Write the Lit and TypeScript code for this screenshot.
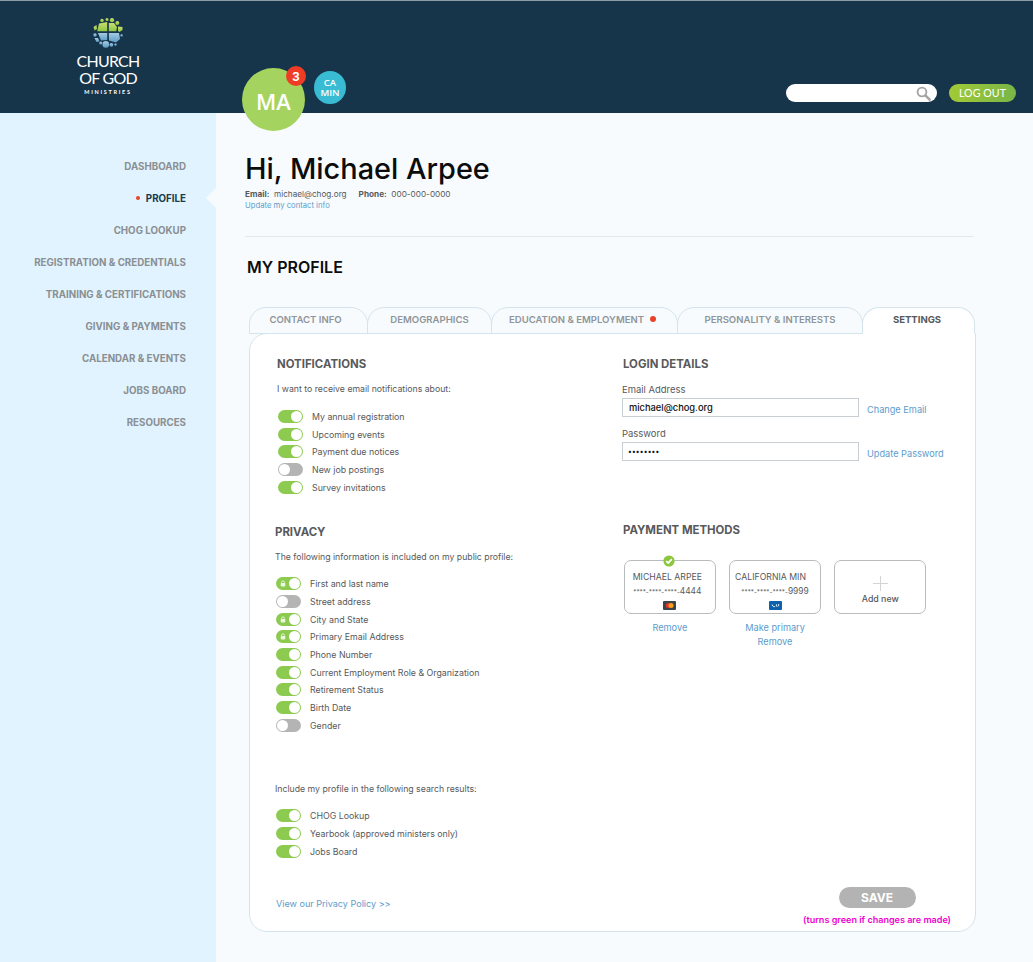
import { LitElement, html, css, svg } from "lit";
import { customElement } from "lit/decorators.js";

const NAV = ["DASHBOARD", "PROFILE", "CHOG LOOKUP", "REGISTRATION & CREDENTIALS", "TRAINING & CERTIFICATIONS", "GIVING & PAYMENTS", "CALENDAR & EVENTS", "JOBS BOARD", "RESOURCES"];
const TABS = [
  { t: "CONTACT INFO", w: 119 },
  { t: "DEMOGRAPHICS", w: 125 },
  { t: "EDUCATION & EMPLOYMENT", w: 187, dot: true },
  { t: "PERSONALITY & INTERESTS", w: 186 },
  { t: "SETTINGS", w: 113, active: true },
];
type Row = [string, boolean, boolean?];
const NOTIFY: Row[] = [["My annual registration", true], ["Upcoming events", true], ["Payment due notices", true], ["New job postings", false], ["Survey invitations", true]];
const PRIV: Row[] = [["First and last name", true, true], ["Street address", false], ["City and State", true, true], ["Primary Email Address", true, true], ["Phone Number", true], ["Current Employment Role & Organization", true], ["Retirement Status", true], ["Birth Date", true], ["Gender", false]];
const SEARCH: Row[] = [["CHOG Lookup", true], ["Yearbook (approved ministers only)", true], ["Jobs Board", true]];

const logo = svg`<svg class="mark" width="30" height="30" viewBox="0 0 30 30">
  <defs>
    <linearGradient id="g" x1="0" y1="0" x2="0" y2="1"><stop offset="0" stop-color="#c9de72"/><stop offset="1" stop-color="#8fc640"/></linearGradient>
    <linearGradient id="b" x1="0" y1="0" x2="0" y2="1"><stop offset="0" stop-color="#a3cbe6"/><stop offset="1" stop-color="#5f9cc4"/></linearGradient>
  </defs>
  <g fill="url(#g)">
    <polygon points="6,5.5 14.2,4 14.2,13.3 4.2,13.3"/>
    <polygon points="15.8,5 21,5 24,9 23.2,13.3 15.8,13.3"/>
    <circle cx="9" cy="2.4" r="1.7"/><circle cx="14" cy="1.6" r="1.5"/><circle cx="19" cy="2.2" r="2.1"/>
    <circle cx="24.3" cy="5" r="2"/><polygon points="25,8.5 29.5,9 29.5,12 26.5,14 25,13"/>
    <polygon points="0.5,9 3.5,7 4,11 1.5,12.5"/>
  </g>
  <g fill="url(#b)">
    <polygon points="5,15 14.2,15 14.2,22 8,22.5"/>
    <polygon points="15.8,15 26,15 27,21 23,24.5 16,22.5"/>
    <circle cx="2" cy="17" r="1.7"/>
    <polygon points="1.5,20 5,20 6.5,23.5 3.5,24"/>
    <circle cx="7.8" cy="25" r="1.6"/>
    <circle cx="12.8" cy="26.4" r="3.3"/><circle cx="18.4" cy="26.8" r="1.9"/><circle cx="22.5" cy="26.6" r="1.2"/>
    <circle cx="28.6" cy="17.4" r="1.2"/>
  </g>
</svg>`;

const search = svg`<svg width="15" height="15" viewBox="0 0 15 15" fill="none" stroke="#a5a5a5"><circle cx="6" cy="6" r="4.4" stroke-width="1.9"/><path d="M9.4 9.4 L13.6 13.6" stroke-width="2.6" stroke-linecap="round"/></svg>`;
const lock = svg`<svg class="lock" width="6" height="7" viewBox="0 0 6 7"><path d="M1.6 3.4V2.2a1.4 1.4 0 0 1 2.8 0V3.4" fill="none" stroke="#eef7e2" stroke-width=".8"/><rect x=".7" y="3" width="4.6" height="3.6" rx=".8" fill="#eef7e2"/></svg>`;
const check = svg`<svg width="12" height="12" viewBox="0 0 12 12"><circle cx="6" cy="6" r="5.6" fill="#8cc63f"/><path d="M3.2 6.2 5.2 8 8.8 4.2" fill="none" stroke="#fff" stroke-width="1.7"/></svg>`;
const mc = svg`<svg class="ci" width="13" height="9" viewBox="0 0 13 9"><rect width="13" height="9" rx="1" fill="#3c4349"/><circle cx="5.2" cy="4.5" r="2.5" fill="#e4322b"/><circle cx="8" cy="4.5" r="2.5" fill="#f7a11d"/></svg>`;
const visa = svg`<svg class="ci" width="13" height="9" viewBox="0 0 13 9"><rect width="13" height="9" rx="1" fill="#0d62ab"/><path d="M3 3.6c1 2.4 2.4 2.4 3.2 1.6M7.6 3.4v2M9.6 3.2c.2 1.2 0 2-.9 2.2" fill="none" stroke="#fff" stroke-width="1"/></svg>`;

@customElement("app-root")
export class AppRoot extends LitElement {
  static styles = css`
    :host { display: block; min-height: 962px; background: #f7fbfe; font-family: Inter, "Liberation Sans", sans-serif; color: #58595b; }
    * { box-sizing: border-box; }
    .top { position: relative; height: 113px; background: #17354a; border-top: 1px solid #8b9ca8; display: flex; align-items: flex-end; }
    .brand { width: 216px; display: flex; flex-direction: column; align-items: center; color: #fff; font-family: Lato, sans-serif; padding-top: 17px; height: 112px; }
    .brand .mark { display: block; margin-bottom: 4px; }
    .brand .l1 { font-size: 16px; line-height: 17px; letter-spacing: -0.75px; font-weight: 400; }
    .brand .l2 { font-size: 5.5px; line-height: 8px; letter-spacing: 1.7px; font-weight: 700; margin-top: 2px; }
    .avatar { position: absolute; left: 242px; top: 67px; width: 63px; height: 63px; border-radius: 50%; background: #a5d35f; color: #fff; display: flex; align-items: center; justify-content: center; font-size: 22px; font-weight: 600; font-family: "Open Sans", sans-serif; padding-top: 3px; z-index: 2; }
    .badge { position: absolute; left: 44px; top: -2px; width: 20px; height: 20px; border-radius: 50%; background: #ee3c25; color: #fff; font-size: 13px; font-weight: 700; display: flex; align-items: center; justify-content: center; font-family: Roboto, sans-serif; }
    .min { position: absolute; left: 314px; top: 70px; width: 32px; height: 33px; border-radius: 50%; background: #39bcd3; color: #fff; font-size: 9.5px; line-height: 9.5px; font-weight: 600; font-family: "Open Sans", sans-serif; display: flex; align-items: center; justify-content: center; text-align: center; }
    .tools { margin-left: auto; display: flex; gap: 12px; padding: 0 17px 11px 0; }
    .search { width: 151px; height: 18px; background: #fff; border-radius: 9px; display: flex; align-items: center; justify-content: flex-end; padding-right: 6px; }
    .logout { width: 67px; height: 18px; border-radius: 9px; background: linear-gradient(90deg, #a2ca35, #79b548); color: #fff; font: 400 10.6px/19px Lato, sans-serif; text-align: center; letter-spacing: 0.1px; }
    .body { display: flex; }
    nav { position: relative; width: 216px; min-height: 849px; background: #e1f3fe; padding: 37px 30px 0 0; }
    .item { height: 32px; display: flex; align-items: center; justify-content: flex-end; gap: 6px; font-size: 9.75px; font-weight: 700; color: #8a8f93; white-space: nowrap; }
    .item.on { color: #1a3a50; position: relative; }
    .item .d { width: 4px; height: 4px; border-radius: 50%; background: #e8432a; }
    .item .arrow { position: absolute; right: -30px; top: 6px; width: 0; height: 0; border: 10px solid transparent; border-right-color: #f7fbfe; border-left: 0; }
    main { width: 760px; padding: 37px 0 30px 29px; }
    h1 { margin: 0; font-size: 28.9px; line-height: 38px; font-weight: 500; color: #0c0c0c; }
    .meta { font-size: 8.2px; line-height: 11px; margin-top: 1px; color: #58595b; display: flex; gap: 12px; }
    .meta b { font-weight: 700; }
    .upd { font-size: 7.7px; line-height: 11px; color: #5d9ccb; }
    .hr { height: 1px; background: #e2e8ec; width: 729px; margin-top: 25px; }
    h2 { margin: 20px 0 0 2px; font-size: 16px; line-height: 20px; font-weight: 600; color: #0c0c0c; }
    .tabs { display: flex; margin: 30px 0 0 4px; position: relative; z-index: 1; }
    .tab { height: 27px; margin-bottom: -1px; border: 1px solid #d5e4ec; border-radius: 17px 17px 0 0; margin-right: -1px; display: flex; align-items: center; justify-content: center; gap: 6px; font-size: 9.55px; font-weight: 600; color: #8f9598; background: #f7fbfe; padding-bottom: 3px; }
    .tab:first-child { padding-right: 6px; }
    .tab:nth-child(3) { padding-right: 4px; }
    .tab:last-child { padding-right: 3px; }
    .tab.on { background: #fff; border-bottom-color: #fff; color: #58595b; font-weight: 700; }
    .tab .d { width: 6px; height: 6px; border-radius: 50%; background: #e8432a; }
    .panel { margin-left: 4px; width: 727px; background: #fff; border: 1px solid #d5e4ec; border-radius: 18px 0 18px 18px; padding: 23px 24px 4px 27px; }
    .cols { display: grid; grid-template-columns: 346px 1fr; }
    h3 { margin: 0; font-size: 11.4px; line-height: 14px; font-weight: 700; color: #58595b; }
    .sub { font-size: 8.73px; line-height: 14px; margin-top: 11px; color: #58595b; }
    .list { margin-top: 10.5px; }
    .list.wide { margin-top: 11.5px; }
    .row { height: 17.7px; display: flex; align-items: center; gap: 9px; font-size: 8.8px; color: #58595b; padding-left: 1px; }
    .sw { position: relative; width: 25px; height: 13px; border-radius: 7px; background: #8ccb4f; flex: none; }
    .sw::after { content: ""; position: absolute; right: 1px; top: 1px; width: 11px; height: 11px; border-radius: 50%; background: #fff; }
    .sw.off { background: #b4b4b4; }
    .sw.off::after { right: auto; left: 1px; }
    .lock { position: absolute; left: 4px; top: 3px; }
    .priv { margin-left: -2px; margin-top: 29.5px; }
    .incl { margin-top: 47.5px; margin-left: -2px; }
    .lab { font-size: 9.45px; line-height: 12px; margin-top: 13px; margin-left: -1px; }
    .lab.second { margin-top: 11px; }
    .lab + .fld { margin-top: 2px; }
    .fld { display: flex; align-items: flex-end; gap: 8px; margin-left: -1px; }
    .input { width: 237px; height: 19px; background: #fff; border: 1px solid #c9ced2; font-size: 9.3px; font-weight: 500; color: #111; padding-left: 6px; display: flex; align-items: center; }
    .input.pw { padding-left: 5px; font-size: 7px; letter-spacing: 0.2px; }
    .link { color: #5d9ccb; font-size: 9.2px; line-height: 14px; white-space: nowrap; }
    .pm { margin-top: 62px; }
    .cards { display: flex; gap: 13.5px; margin: 23px 0 0 1px; }
    .cardcol { width: 91.7px; display: flex; flex-direction: column; align-items: center; }
    .card { position: relative; width: 100%; height: 54px; border: 1px solid #b9bcbe; border-radius: 7px; display: flex; flex-direction: column; align-items: center; background: #fff; font-size: 8.7px; }
    .card .nm { line-height: 12px; margin-top: 10px; white-space: nowrap; padding-right: 5px; }
    .cardcol:nth-child(2) .nm { padding-right: 9px; }
    .card .nr { line-height: 12px; margin-top: 2px; white-space: nowrap; font-size: 8.4px; }
    .cardcol:first-child .nr { padding-right: 5px; }
    .mask { font-size: 6.3px; }
    .card .ci { margin-top: 3px; display: block; }
    .check { position: absolute; left: 38px; top: -6px; line-height: 0; }
    .acts { margin-top: 7px; text-align: center; }
    .acts .link { display: block; }
    .plus { position: relative; width: 15px; height: 15px; margin-top: 15px; }
    .plus::before, .plus::after { content: ""; position: absolute; background: #d2d4d5; }
    .plus::before { left: 7px; top: 0; width: 1px; height: 15px; }
    .plus::after { left: 0; top: 7px; width: 15px; height: 1px; }
    .add { font-size: 8.8px; font-weight: 500; line-height: 12px; margin-top: 2px; }
    .foot { display: flex; justify-content: space-between; margin-top: 27px; }
    .foot > .link { margin: 10px 0 0 -1px; font-size: 9.05px; }
    .sv { display: flex; flex-direction: column; align-items: center; }
    .save { width: 77px; height: 21px; border-radius: 11px; background: #b3b3b3; color: #fff; font-size: 12px; font-weight: 700; line-height: 21px; text-align: center; }
    .note { font-size: 9.05px; line-height: 14px; color: #f000d0; font-weight: 600; margin-top: 5px; white-space: nowrap; }
  `;

  private rows(list: Row[]) {
    return list.map(([t, on, locked]) => html`<div class="row"><span class="sw ${on ? "" : "off"}">${locked ? lock : ""}</span><span>${t}</span></div>`);
  }

  render() {
    return html`
      <div class="top">
        <div class="brand">${logo}<div class="l1">CHURCH</div><div class="l1">OF GOD</div><div class="l2">MINISTRIES</div></div>
        <div class="avatar">MA<span class="badge">3</span></div>
        <div class="min">CA<br />MIN</div>
        <div class="tools"><div class="search">${search}</div><div class="logout">LOG OUT</div></div>
      </div>
      <div class="body">
        <nav>
          ${NAV.map((n) => n === "PROFILE"
            ? html`<div class="item on"><span class="d"></span>${n}<span class="arrow"></span></div>`
            : html`<div class="item">${n}</div>`)}
        </nav>
        <main>
          <h1>Hi, Michael Arpee</h1>
          <div class="meta"><span><b>Email:</b>&nbsp; michael@chog.org</span><span><b>Phone:</b>&nbsp; 000-000-0000</span></div>
          <div class="upd">Update my contact info</div>
          <div class="hr"></div>
          <h2>MY PROFILE</h2>
          <div class="tabs">
            ${TABS.map((t) => html`<div class="tab ${t.active ? "on" : ""}" style="width:${t.w}px">${t.t}${t.dot ? html`<span class="d"></span>` : ""}</div>`)}
          </div>
          <div class="panel">
            <div class="cols">
              <div>
                <h3>NOTIFICATIONS</h3>
                <div class="sub">I want to receive email notifications about:</div>
                <div class="list wide">${this.rows(NOTIFY)}</div>
                <div class="priv">
                  <h3>PRIVACY</h3>
                  <div class="sub">The following information is included on my public profile:</div>
                  <div class="list">${this.rows(PRIV)}</div>
                </div>
                <div class="incl">
                  <div class="sub">Include my profile in the following search results:</div>
                  <div class="list wide">${this.rows(SEARCH)}</div>
                </div>
              </div>
              <div>
                <h3>LOGIN DETAILS</h3>
                <div class="lab">Email Address</div>
                <div class="fld"><div class="input">michael@chog.org</div><span class="link">Change Email</span></div>
                <div class="lab second">Password</div>
                <div class="fld"><div class="input pw">••••••••</div><span class="link">Update Password</span></div>
                <h3 class="pm">PAYMENT METHODS</h3>
                <div class="cards">
                  <div class="cardcol">
                    <div class="card"><span class="check">${check}</span><div class="nm">MICHAEL ARPEE</div><div class="nr"><span class="mask">****-****-****-</span>4444</div>${mc}</div>
                    <div class="acts"><span class="link">Remove</span></div>
                  </div>
                  <div class="cardcol">
                    <div class="card"><div class="nm">CALIFORNIA MIN</div><div class="nr"><span class="mask">****-****-****-</span>9999</div>${visa}</div>
                    <div class="acts"><span class="link">Make primary</span><span class="link">Remove</span></div>
                  </div>
                  <div class="cardcol">
                    <div class="card"><div class="plus"></div><div class="add">Add new</div></div>
                  </div>
                </div>
              </div>
            </div>
            <div class="foot">
              <span class="link">View our Privacy Policy &gt;&gt;</span>
              <div class="sv"><div class="save">SAVE</div><div class="note">(turns green if changes are made)</div></div>
            </div>
          </div>
        </main>
      </div>
    `;
  }
}
